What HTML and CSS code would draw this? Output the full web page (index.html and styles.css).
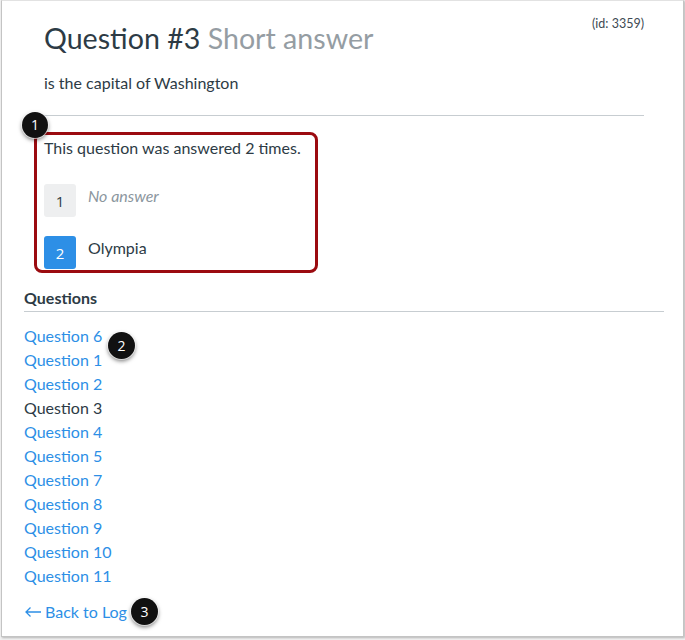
FILE: index.html
```html
<!DOCTYPE html>
<html>
<head>
<meta charset="utf-8">
<link rel="stylesheet" href="styles.css">
</head>
<body>
<div class="frame">
  <div class="section">
    <div class="title-row">
      <h1 class="title">Question #3 <span class="type">Short answer</span></h1>
      <span class="qid">(id: 3359)</span>
    </div>
    <p class="qtext">is the capital of Washington</p>
    <div class="rule"></div>
    <div class="answers">
      <span class="badge badge-1">1</span>
      <p class="count">This question was answered 2 times.</p>
      <div class="arow">
        <span class="num num-gray">1</span>
        <span class="atext none">No answer</span>
      </div>
      <div class="arow arow-2">
        <span class="num num-blue">2</span>
        <span class="atext">Olympia</span>
      </div>
    </div>
  </div>
  <h2 class="qhead">Questions</h2>
  <ul class="qlist">
    <li><a class="qlink">Question 6</a></li>
    <li><a class="qlink">Question 1</a></li>
    <li><a class="qlink">Question 2</a></li>
    <li><span class="qcur">Question 3</span></li>
    <li><a class="qlink">Question 4</a></li>
    <li><a class="qlink">Question 5</a></li>
    <li><a class="qlink">Question 7</a></li>
    <li><a class="qlink">Question 8</a></li>
    <li><a class="qlink">Question 9</a></li>
    <li><a class="qlink">Question 10</a></li>
    <li><a class="qlink">Question 11</a></li>
    <span class="badge badge-2">2</span>
  </ul>
  <p class="back">
    <a class="qlink backlink"><svg class="arrow" width="18" height="12" viewBox="0 0 18 12"><path d="M17 6H2M6.5 1.5L2 6l4.5 4.5" fill="none" stroke="#2d8fe6" stroke-width="1.3"/></svg>Back to Log</a>
    <span class="badge badge-3">3</span>
  </p>
</div>
</body>
</html>
```
FILE: styles.css
```css
html, body {
  margin: 0;
  padding: 0;
}
body {
  background: #f1f1f1;
  font-family: Lato, "Open Sans", "Liberation Sans", sans-serif;
  color: #2d3b45;
  width: 685px;
  height: 640px;
  overflow: hidden;
}
.frame {
  box-sizing: border-box;
  margin-left: 1px;
  width: 683px;
  height: 637px;
  background: #fff;
  border: 1px solid #c4c4c4;
  border-top-color: #e2e2e2;
  box-shadow: 1px 1px 2px rgba(0,0,0,0.25);
  padding: 0 19px 0 22px;
}
.section {
  padding: 0 20px;
}
.title-row {
  display: flex;
  justify-content: space-between;
  align-items: flex-start;
  padding-top: 16px;
}
.title {
  margin: 4px 0 0;
  font-size: 28.6px;
  line-height: 34px;
  font-weight: 400;
  color: #2d3b45;
}
.type {
  color: #959da3;
}
.qid {
  font-size: 12.5px;
  line-height: 14px;
  color: #3d4a53;
}
.qtext {
  margin: 17px 0 0;
  font-size: 16px;
  line-height: 22px;
}
.rule {
  margin-top: 21px;
  height: 1px;
  background: #c7cdd1;
}
.answers {
  position: relative;
  margin: 16px 0 0 -10px;
  width: 284px;
  box-sizing: border-box;
  border: 3px solid #9b0b10;
  border-radius: 8px;
  padding: 2px 7px 1px;
}
.count {
  margin: 0;
  font-size: 16px;
  line-height: 22px;
}
.arow {
  display: flex;
  align-items: flex-start;
  gap: 12px;
  margin-top: 25px;
}
.arow-2 {
  margin-top: 19px;
}
.num {
  width: 32px;
  height: 33px;
  border-radius: 3px;
  display: flex;
  align-items: center;
  justify-content: center;
  font-family: "Open Sans", "Liberation Sans", sans-serif;
  font-size: 15px;
  padding-top: 1px;
  box-sizing: border-box;
}
.num-gray {
  background: #eeeff0;
  color: #2d3b45;
}
.num-blue {
  background: #2d8fe6;
  color: #fff;
}
.atext {
  font-size: 16px;
  line-height: 24px;
}
.none {
  font-style: italic;
  color: #8b969e;
}
.qhead {
  margin: 14px 0 0;
  font-size: 16px;
  line-height: 22px;
  font-weight: 700;
  padding-bottom: 2px;
  border-bottom: 1px solid #c7cdd1;
}
.qlist {
  position: relative;
  list-style: none;
  margin: 12px 0 0;
  padding: 0;
}
.qlist li {
  font-size: 16px;
  line-height: 24px;
}
.qlink {
  color: #2d8fe6;
  text-decoration: none;
}
.qcur {
  color: #2d3b45;
}
.back {
  position: relative;
  margin: 12px 0 0;
  font-size: 16px;
  line-height: 24px;
}
.backlink {
  display: inline-flex;
  align-items: center;
}
.arrow {
  margin-right: 3px;
}
.badge {
  position: absolute;
  width: 27px;
  height: 27px;
  border-radius: 50%;
  background: #111;
  color: #fff;
  font-family: "Open Sans", "Liberation Sans", sans-serif;
  font-size: 14px;
  line-height: 27px;
  text-align: center;
  box-shadow: 0 0 0 1px rgba(255,255,255,0.6), 0 2px 4px rgba(0,0,0,0.55);
}
.badge-1 {
  left: -15px;
  top: -23px;
  width: 26px;
  height: 26px;
  line-height: 25px;
}
.badge-2 {
  left: 84px;
  top: 8px;
}
.badge-3 {
  left: 107px;
  top: -2px;
}
```
